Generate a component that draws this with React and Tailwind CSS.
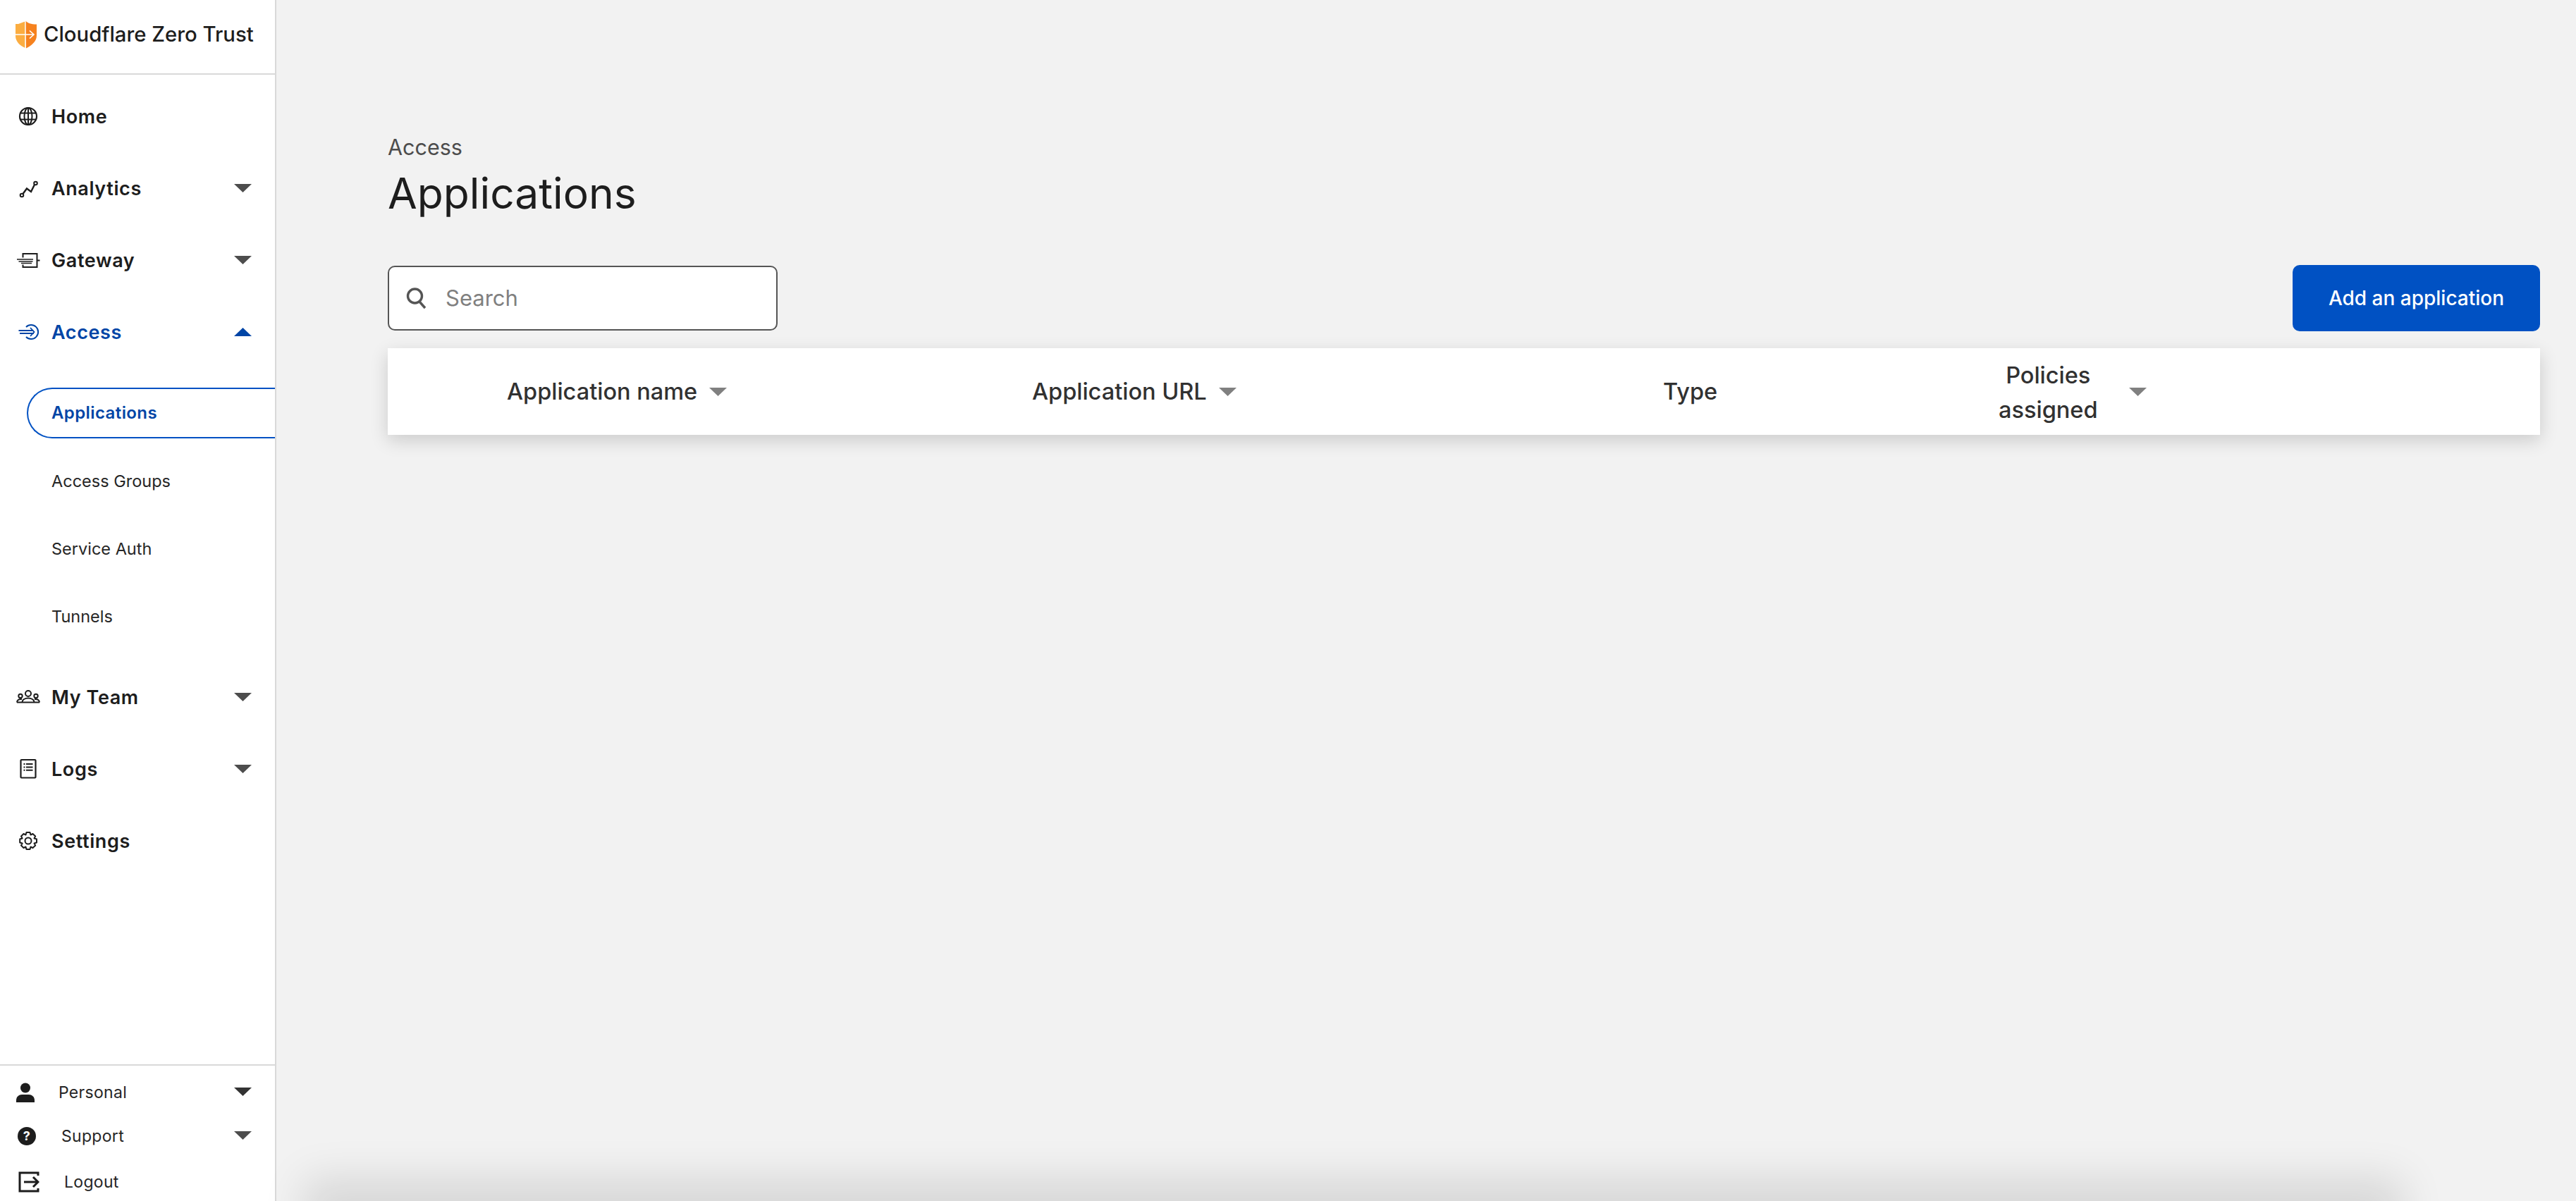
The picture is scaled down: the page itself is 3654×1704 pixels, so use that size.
import React from "react";

const font = { fontFamily: "Inter, 'Noto Sans', sans-serif" };

function Caret({ up, className }) {
  return (
    <svg width="25" height="12" viewBox="0 0 25 12" className={className} fill="currentColor">
      {up ? <path d="M12.5 0 25 12H0z" /> : <path d="M0 0h25L12.5 12z" />}
    </svg>
  );
}

function Logo() {
  return (
    <svg width="32" height="40" viewBox="0 0 32 40">
      <path d="M14.5 1.5 5 5H1v17c0 8 6.500 14 14 17z" fill="#fbad41" />
      <path d="M15 .5c3 3 8 5 16 5v16c0 8-7 14-15 18z" fill="#f6821f" />
      <path d="M15 0v40" stroke="#fff" strokeWidth="1.5" opacity="0.85" />
      <path d="M1 20h26M21 14.500l6 5.500-6 5.500" stroke="#fff" strokeWidth="1.600" fill="none" />
    </svg>
  );
}

function Icon({ children, className }) {
  return (
    <svg width="34" height="34" viewBox="0 0 34 34" fill="none" stroke="currentColor" strokeWidth="2" className={className}>
      {children}
    </svg>
  );
}

const icons = {
  home: (
    <Icon>
      <circle cx="17" cy="17" r="12" strokeWidth="2.200" />
      <ellipse cx="17" cy="17" rx="5.500" ry="12" />
      <path d="M17 5v24M6 12.500h22M6 21.500h22" />
    </Icon>
  ),
  analytics: (
    <Icon>
      <circle cx="8" cy="27" r="2.300" />
      <circle cx="27.500" cy="10" r="2.300" />
      <path d="M9.500 25 15 17.500l6 4.500 5-10" strokeWidth="2.400" />
    </Icon>
  ),
  gateway: (
    <Icon>
      <path d="M9.500 13.500V8h20v19h-20v-3.500M29.500 17.500h4" />
      <path d="M1 16h23M3.500 19h20M7 21.500h15" strokeWidth="1.700" />
    </Icon>
  ),
  access: (
    <Icon>
      <path d="M14 10a10 10 0 1 1 0 14" />
      <path d="M3.500 15h21M5 19h20M20 11l5.500 6-5.500 6" strokeWidth="1.800" />
    </Icon>
  ),
  team: (
    <Icon>
      <circle cx="17" cy="12" r="4" />
      <circle cx="6" cy="15.500" r="2.700" />
      <circle cx="28" cy="15.500" r="2.700" />
      <path d="M8.500 24.500c0-8 17-8 17 0M1 24.500h32M1 24.500c0-3 3-5 7-4.500M33 24.500c0-3-3-5-7-4.500" />
    </Icon>
  ),
  logs: (
    <Icon>
      <rect x="6.500" y="4" width="21" height="25.500" rx="1" strokeWidth="2.200" />
      <path d="M14 10h9.500M14 14.500h9.500M14 18.800h9.500M10.500 10h2M10.500 14.500h2M10.500 18.800h2" />
    </Icon>
  ),
  settings: (
    <Icon>
      <circle cx="17" cy="17" r="4.500" />
      <path d="M14.500 5h5l1 3.500 3-1.500 3.700 3.500-1.700 3 3.500 1v5l-3.500 1 1.700 3-3.700 3.500-3-1.500-1 3.500h-5l-1-3.500-3 1.500L7 23.500l1.700-3-3.500-1v-5l3.500-1-1.700-3L10.500 7l3 1.500z" strokeLinejoin="round" />
    </Icon>
  ),
};

function NavRow({ icon, label, caret, active }) {
  return (
    <div className={`flex h-[102px] items-center ${active ? "text-[#0045a6]" : "text-[#1d1d1d]"}`}>
      <div className="flex w-[73px] justify-center pl-[7px]">{icons[icon]}</div>
      <span className="pt-[2px] text-[27px] font-semibold tracking-[0.6px]">{label}</span>
      {caret && <Caret up={active} className={`ml-auto mr-[33px] ${active ? "text-[#0045a6]" : "text-[#4d4d4d]"}`} />}
    </div>
  );
}

function SubRow({ label, active }) {
  return (
    <div className="flex h-[96px] items-center">
      {active ? (
        <div className="ml-[38px] flex h-[72px] flex-1 items-center rounded-l-full border-y-2 border-l-2 border-[#0051c3] pl-[33px] text-[24px] font-semibold tracking-[0.4px] text-[#0045a6]">
          {label}
        </div>
      ) : (
        <span className="pl-[73px] pt-[2px] text-[23.5px] text-[#262626]">{label}</span>
      )}
    </div>
  );
}

function Sidebar() {
  return (
    <aside className="flex h-full w-[392px] shrink-0 flex-col border-r-2 border-[#d9d9d9] bg-white">
      <div className="flex h-[106px] shrink-0 items-center gap-[9px] border-b-2 border-[#d9d9d9] pb-[6px] pl-[21px]">
        <Logo />
        <span className="text-[29.3px] font-medium leading-none text-[#1d1d1d]">Cloudflare Zero Trust</span>
      </div>
      <nav className="flex flex-1 flex-col pt-[8px]">
        <NavRow icon="home" label="Home" />
        <NavRow icon="analytics" label="Analytics" caret />
        <NavRow icon="gateway" label="Gateway" caret />
        <NavRow icon="access" label="Access" caret active />
        <div className="my-[16px]">
          <SubRow label="Applications" active />
          <SubRow label="Access Groups" />
          <SubRow label="Service Auth" />
          <SubRow label="Tunnels" />
        </div>
        <NavRow icon="team" label="My Team" caret />
        <NavRow icon="logs" label="Logs" caret />
        <NavRow icon="settings" label="Settings" />
      </nav>
      <div className="h-[194px] shrink-0 border-t-2 border-[#d9d9d9] pt-[7px] text-[23px] tracking-[0.3px] text-[#262626]">
        <div className="flex h-[62px] items-center">
          <div className="flex w-[83px] pl-[22px]">
            <svg width="28" height="29" viewBox="0 0 28 29" fill="#1d1d1d">
              <circle cx="14" cy="7.500" r="7" />
              <path d="M1 28v-3c0-5 4-8 8-8h10c4 0 8 3 8 8v3z" />
            </svg>
          </div>
          <span>Personal</span>
          <Caret className="ml-auto mr-[33px] -mt-[2px] text-[#333]" />
        </div>
        <div className="flex h-[62px] items-center">
          <div className="flex w-[87px] pl-[25px]">
            <div className="flex size-[26px] items-center justify-center rounded-full bg-[#1d1d1d] text-[18px] font-bold leading-none text-white">?</div>
          </div>
          <span>Support</span>
          <Caret className="-mt-[2px] ml-auto mr-[33px] text-[#4d4d4d]" />
        </div>
        <div className="mt-[4px] flex h-[60px] items-center">
          <div className="flex w-[91px] pl-[26px]">
            <svg width="30" height="30" viewBox="0 0 30 30" fill="none" stroke="#1d1d1d" strokeWidth="3">
              <path d="M28 6V2H2v26h26v-4M8 15h20M21 8l7 7-7 7" />
            </svg>
          </div>
          <span>Logout</span>
        </div>
      </div>
    </aside>
  );
}

function Main() {
  return (
    <main className="flex min-w-0 flex-1 flex-col pl-[158px] pr-[51px] pt-[189px]">
      <div className="text-[30.500px] leading-[40px] text-[#4d4d4d]">Access</div>
      <h1 className="mt-[7px] text-[60.500px] font-normal leading-[76px] text-[#1d1d1d]">Applications</h1>
      <div className="mt-[64px] flex items-center justify-between">
        <div className="flex h-[92px] w-[553px] items-center rounded-[10px] border-2 border-[#555] bg-white pl-[24px]">
          <svg width="30" height="32" viewBox="0 0 30 32" fill="none" stroke="#555" strokeWidth="3.400">
            <circle cx="12.500" cy="13" r="10" />
            <path d="M19 21l8 9" />
          </svg>
          <span className="ml-[26px] pt-[1px] text-[31px] text-[#808080]">Search</span>
        </div>
        <button className="h-[94px] w-[351px] rounded-[10px] bg-[#0051c3] text-center text-[28px] font-medium text-white">Add an application</button>
      </div>
      <div className="mt-[24px] flex h-[123px] items-center bg-white pl-[169px] pt-[2px] text-[32.500px] font-medium text-[#313131] shadow-[0_8px_24px_rgba(0,0,0,0.16)]">
        <div className="flex w-[745px] items-center gap-[17px]">
          <span>Application name</span>
          <Caret className="-mt-[2px] text-[#808080]" />
        </div>
        <div className="flex w-[895px] items-center gap-[17px]">
          <span>Application URL</span>
          <Caret className="-mt-[2px] text-[#808080]" />
        </div>
        <div className="w-[476px]">Type</div>
        <div className="flex items-center gap-[44px]">
          <div className="text-center leading-[49px]">
            Policies
            <br />
            assigned
          </div>
          <Caret className="-mt-[2px] text-[#808080]" />
        </div>
      </div>
    </main>
  );
}

export default function App() {
  return (
    <div className="relative flex h-[1704px] w-[3654px] overflow-hidden bg-[#f2f2f2]" style={font}>
      <Sidebar />
      <Main />
      {/* footer sits just below the fold, only its shadow shows */}
      <div className="absolute bottom-[-30px] left-[464px] h-[30px] w-[2912px] shadow-[0_0_60px_32px_rgba(0,0,0,0.115)]" />
    </div>
  );
}
